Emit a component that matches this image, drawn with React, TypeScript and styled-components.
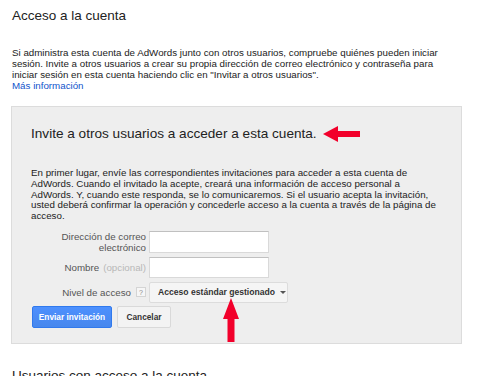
import React from 'react';
import styled, { createGlobalStyle } from 'styled-components';

const GlobalStyle = createGlobalStyle`
  body {
    margin: 0;
    background: #fff;
    font-family: "Liberation Sans", Arial, sans-serif;
    color: #222;
  }
`;

const LeftArrow = () => (
  <svg width="37" height="16" viewBox="0 0 37 16">
    <polygon points="0,8 15,0 15,5 37,5 37,11 15,11 15,16" fill="#f2002b" />
  </svg>
);

const UpArrow = () => (
  <svg width="16" height="44" viewBox="0 0 16 44">
    <polygon points="8,0 16,21 11.5,21 11.5,44 4.5,44 4.5,21 0,21" fill="#f2002b" />
  </svg>
);

const App = () => {
  return (
    <>
      <GlobalStyle />
      <Page>
        <Title>Acceso a la cuenta</Title>
        <Intro>
          Si administra esta cuenta de AdWords junto con otros usuarios, compruebe quiénes pueden iniciar
          sesión. Invite a otros usuarios a crear su propia dirección de correo electrónico y contraseña para
          iniciar sesión en esta cuenta haciendo clic en "Invitar a otros usuarios".
          <br />
          <Link href="#">Más información</Link>
        </Intro>

        <Panel>
          <PanelHeading>
            Invite a otros usuarios a acceder a esta cuenta.
            <LeftArrow />
          </PanelHeading>
          <PanelText>
            En primer lugar, envíe las correspondientes invitaciones para acceder a esta cuenta de
            AdWords. Cuando el invitado la acepte, creará una información de acceso personal a
            AdWords. Y, cuando este responda, se lo comunicaremos. Si el usuario acepta la invitación,
            usted deberá confirmar la operación y concederle acceso a la cuenta a través de la página de
            acceso.
          </PanelText>

          <Form>
            <Label>
              Dirección de correo
              <br />
              electrónico
            </Label>
            <Input $height={22} />
            <Label>
              Nombre <Muted>(opcional)</Muted>
            </Label>
            <Input $height={21} />
            <Label>
              Nivel de acceso <Help>?</Help>
            </Label>
            <Dropdown>
              Acceso estándar gestionado <Caret />
            </Dropdown>
          </Form>

          <Actions>
            <Button $primary $width={80}>Enviar invitación</Button>
            <Button $width={54}>Cancelar</Button>
          </Actions>

          <UpArrowSpot>
            <UpArrow />
          </UpArrowSpot>
        </Panel>

        <Title>Usuarios con acceso a la cuenta</Title>
      </Page>
    </>
  );
};

export default App;

const Page = styled.div`
  padding: 7px 30px 0 12px;
`;

const Title = styled.h2`
  margin: 0;
  font-size: 13.5px;
  font-weight: normal;
  line-height: 18px;
  color: #222;
`;

const Intro = styled.p`
  margin: 22px 0 0;
  font-size: 9.75px;
  line-height: 11px;
  color: #222;
`;

const Link = styled.a`
  color: #1155cc;
  text-decoration: none;
`;

const Panel = styled.div`
  position: relative;
  box-sizing: border-box;
  margin: 15px 0 23px -1px;
  width: 451px;
  height: 238px;
  padding: 18px 19px 0;
  background: #eeeeee;
  border: 1px solid #dcdcdc;
`;

const PanelHeading = styled.h3`
  display: flex;
  align-items: center;
  gap: 6px;
  margin: 0;
  font-size: 13.6px;
  font-weight: normal;
  line-height: 18px;
  color: #222;
`;

const PanelText = styled.p`
  margin: 25px 0 0;
  font-size: 9.75px;
  line-height: 10.8px;
  color: #222;
`;

const Form = styled.div`
  display: grid;
  grid-template-columns: 115px auto;
  justify-content: start;
  align-items: center;
  column-gap: 3px;
  row-gap: 4px;
  margin-top: 9px;
`;

const Label = styled.div`
  display: flex;
  justify-content: flex-end;
  align-items: center;
  flex-wrap: wrap;
  gap: 0 4px;
  text-align: right;
  font-size: 9.75px;
  line-height: 11px;
  color: #555;
`;

const Muted = styled.span`
  color: #b8b8b8;
`;

const Help = styled.span`
  display: inline-flex;
  align-items: center;
  justify-content: center;
  box-sizing: border-box;
  width: 10px;
  height: 10px;
  border: 1px solid #d4d4d4;
  background: #f6f6f6;
  font-size: 7px;
  color: #888;
  margin-left: 1px;
`;

const Input = styled.div<{ $height: number }>`
  box-sizing: border-box;
  width: 120px;
  height: ${(p) => p.$height}px;
  background: #fff;
  border: 1px solid #d9d9d9;
  border-top-color: #c0c0c0;
`;

const Dropdown = styled.div`
  box-sizing: border-box;
  display: flex;
  align-items: center;
  gap: 5px;
  width: 139px;
  height: 21px;
  padding: 0 8px;
  background: #f5f5f5;
  border: 1px solid #dcdcdc;
  border-radius: 2px;
  font-size: 8.6px;
  font-weight: bold;
  color: #333;
  white-space: nowrap;
`;

const Caret = styled.span`
  width: 0;
  height: 0;
  border-left: 3px solid transparent;
  border-right: 3px solid transparent;
  border-top: 3px solid #555;
`;

const Actions = styled.div`
  display: flex;
  gap: 5px;
  margin-top: 3px;
  margin-left: 1px;
`;

const Button = styled.button<{ $primary?: boolean; $width: number }>`
  box-sizing: border-box;
  width: ${(p) => p.$width}px;
  height: 22px;
  padding: 0;
  border-radius: 2px;
  font-family: "Liberation Sans", Arial, sans-serif;
  font-size: 8.3px;
  font-weight: bold;
  white-space: nowrap;
  color: ${(p) => (p.$primary ? '#fff' : '#333')};
  background: ${(p) => (p.$primary ? 'linear-gradient(#4d90fe, #4787ed)' : '#f3f3f3')};
  border: 1px solid ${(p) => (p.$primary ? '#3079ed' : '#d9d9d9')};
`;

const UpArrowSpot = styled.div`
  position: absolute;
  left: 211px;
  top: 191px;
  line-height: 0;
`;
